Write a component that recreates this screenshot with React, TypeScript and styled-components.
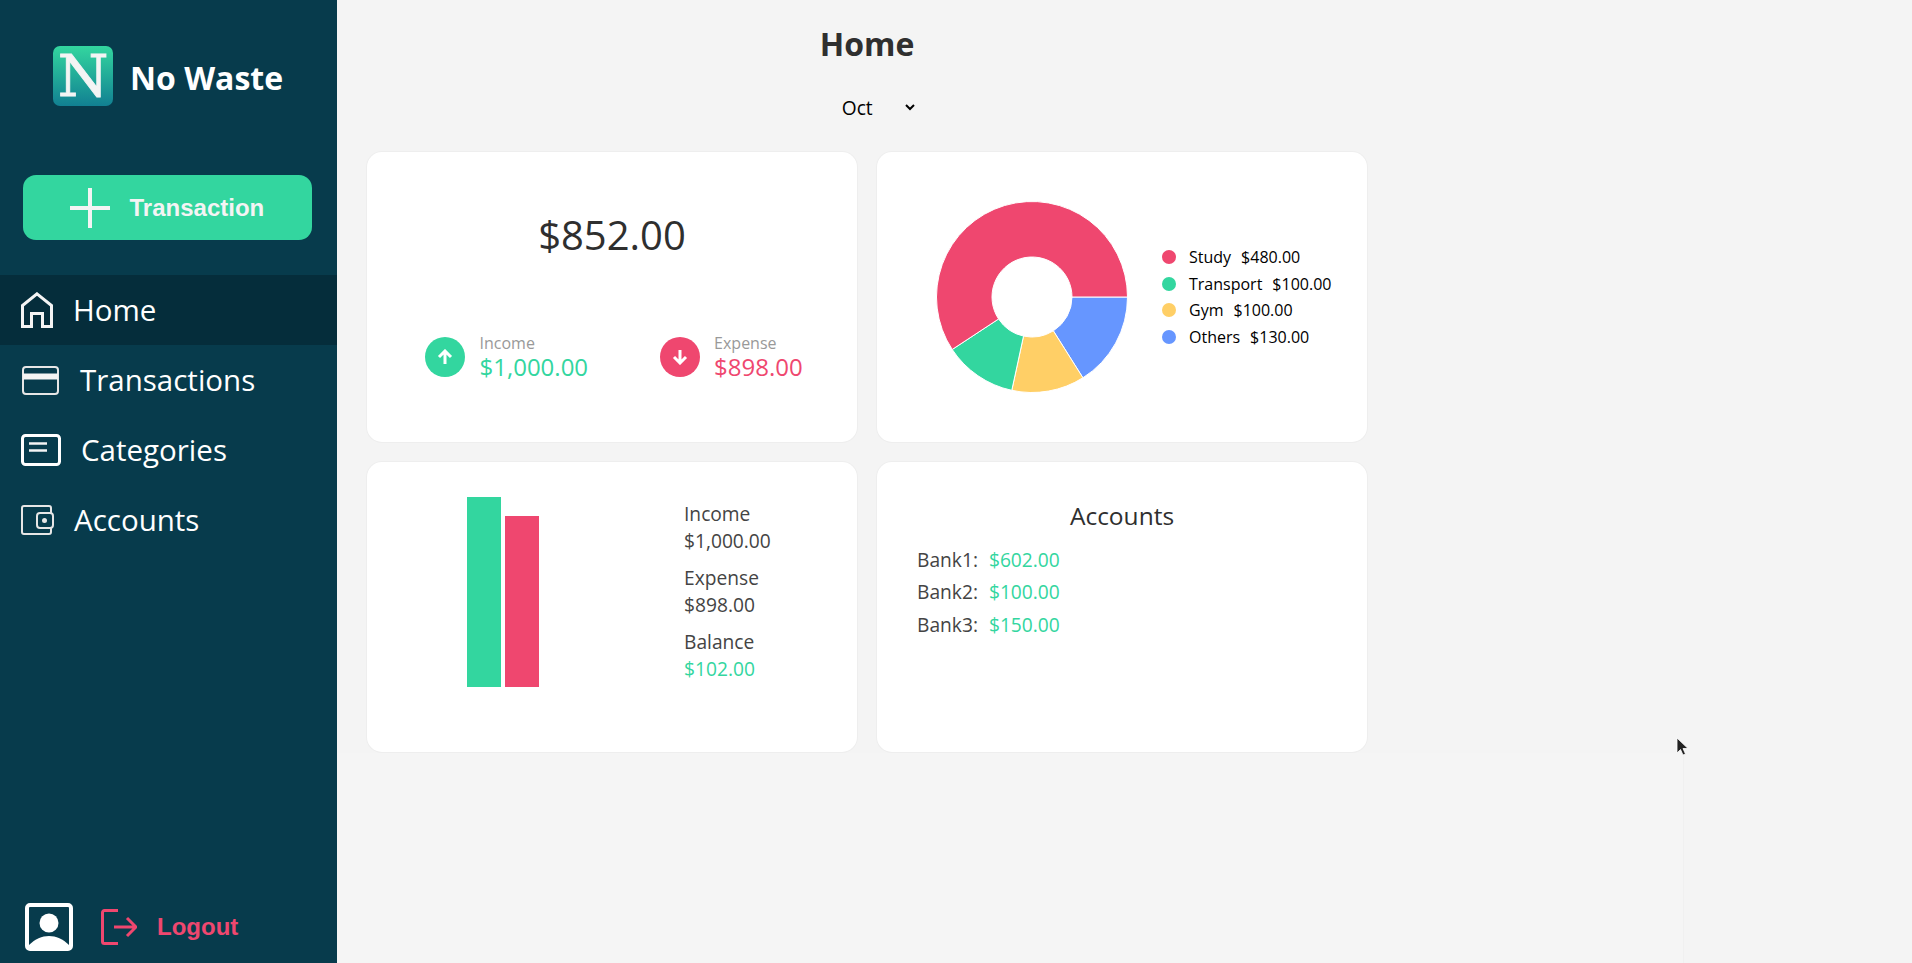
import React from "react";
import styled, { createGlobalStyle } from "styled-components";

const GREEN = "#33d69f";
const RED = "#ef476f";
const YELLOW = "#ffcf66";
const BLUE = "#6696ff";

const GlobalStyle = createGlobalStyle`
  * {
    box-sizing: border-box;
  }
  html, body {
    margin: 0;
    padding: 0;
    height: 100%;
    overflow: hidden;
    background: #f4f4f4;
    font-family: "Open Sans", sans-serif;
  }
`;

const Layout = styled.div`
  display: flex;
  height: 963px;
  width: 1912px;
  overflow: hidden;
`;

const Sidebar = styled.aside`
  width: 337px;
  flex-shrink: 0;
  height: 100%;
  background: #073b4c;
  display: flex;
  flex-direction: column;
`;

const Brand = styled.div`
  display: flex;
  align-items: center;
  gap: 17px;
  padding: 46px 0 0 53px;
`;

const LogoTile = styled.div`
  width: 60px;
  height: 60px;
  border-radius: 7px;
  background: linear-gradient(180deg, #33d69f 0%, #118092 100%);
  color: #f4f4f4;
  display: flex;
  align-items: center;
  justify-content: center;
  font-family: "DejaVu Serif", serif;
  font-weight: 400;
  font-size: 58px;
  line-height: 60px;
  -webkit-text-stroke: 0.8px #f4f4f4;
`;

const BrandName = styled.span`
  margin-top: 2px;
  color: #fff;
  font-size: 32px;
  font-weight: 700;
`;

const AddButton = styled.button`
  margin: 69px 0 0 23px;
  width: 289px;
  height: 65px;
  border: none;
  border-radius: 13px;
  background: ${GREEN};
  color: #f4f4f4;
  display: flex;
  align-items: center;
  gap: 19.5px;
  padding: 0 0 0 47px;
  font-family: "Liberation Sans", sans-serif;
  font-size: 24px;
  font-weight: 700;
`;

const Nav = styled.nav`
  margin-top: 35px;
  display: flex;
  flex-direction: column;
`;

const NavItem = styled.a<{ $active?: boolean; $indent?: number; $gap?: number }>`
  height: 70px;
  display: flex;
  align-items: center;
  gap: ${(p) => p.$gap ?? 20}px;
  padding-left: ${(p) => p.$indent ?? 21}px;
  color: #fff;
  font-size: 29.5px;
  background: ${(p) => (p.$active ? "#052d3b" : "transparent")};
`;

const NavLabel = styled.span`
  margin-bottom: 2px;
`;

const SideFooter = styled.div`
  margin-top: auto;
  padding: 0 0 12px 25px;
  display: flex;
  align-items: center;
`;

const LogoutLink = styled.a`
  margin-left: 28px;
  display: flex;
  align-items: center;
  gap: 20px;
  color: ${RED};
  font-family: "Liberation Sans", sans-serif;
  font-size: 24px;
  font-weight: 700;
`;

const Main = styled.main`
  width: 1347px;
  height: 100%;
  padding-left: 30px;
  background:
    linear-gradient(#f4f4f4 753px, #f0f0f0 753px) right top / 1px 100% no-repeat,
    linear-gradient(#f4f4f4 753px, #f5f5f5 753px);
`;

const Content = styled.div`
  width: 1000px;
  display: flex;
  flex-direction: column;
  align-items: center;
`;

const Title = styled.h1`
  margin: 22px 0 0;
  font-size: 32px;
  line-height: 44px;
  font-weight: 700;
  color: #2f2f2f;
`;

const MonthSelect = styled.select`
  margin: 27px 0 0 21.5px;
  width: 80px;
  height: 28px;
  border: none;
  background: transparent;
  color: #000;
  font-family: "Open Sans", sans-serif;
  font-size: 19.2px;
`;

const CardGrid = styled.div`
  margin-top: 31px;
  width: 100%;
  display: grid;
  grid-template-columns: 490px 490px;
  grid-auto-rows: 290px;
  gap: 20px;
`;

const Card = styled.section`
  background: #fff;
  box-shadow: 0 0 0 1px #eee;
  border-radius: 15px;
  display: flex;
`;

const BalanceCard = styled(Card)`
  flex-direction: column;
`;

const BalanceAmount = styled.div`
  margin-top: 56px;
  text-align: center;
  font-size: 40px;
  line-height: 54px;
  color: #2f2f2f;
`;

const FlowRow = styled.div`
  margin-top: 72px;
  padding-left: 58px;
  display: flex;
  gap: 71.5px;
`;

const Flow = styled.div`
  display: flex;
  align-items: center;
  gap: 14.5px;
`;

const FlowBadge = styled.div<{ $color: string }>`
  width: 40px;
  height: 40px;
  border-radius: 50%;
  background: ${(p) => p.$color};
  display: flex;
  align-items: center;
  justify-content: center;
`;

const FlowText = styled.div`
  display: flex;
  flex-direction: column;
`;

const FlowLabel = styled.span`
  font-size: 16px;
  line-height: 19px;
  color: #999;
`;

const FlowValue = styled.span<{ $color: string }>`
  font-size: 24px;
  line-height: 27px;
  color: ${(p) => p.$color};
`;

const DonutCard = styled(Card)`
  align-items: center;
  padding: 0 0 0 58.5px;
`;

const Legend = styled.ul`
  margin: 0 0 0 34.5px;
  padding: 0;
  list-style: none;
  display: flex;
  flex-direction: column;
`;

const LegendItem = styled.li`
  height: 26.4px;
  display: flex;
  align-items: center;
  gap: 13px;
  font-size: 16px;
  color: #000;
`;

const LegendDot = styled.span<{ $color: string }>`
  width: 14px;
  height: 14px;
  border-radius: 50%;
  background: ${(p) => p.$color};
`;

const LegendAmount = styled.span`
  margin-left: 10px;
`;

const SummaryCard = styled(Card)`
  padding: 35px 0 0 100px;
`;

const Bars = styled.div`
  width: 72px;
  height: 190px;
  display: flex;
  align-items: flex-end;
  gap: 4px;
`;

const Bar = styled.div<{ $color: string; $height: number }>`
  width: 34px;
  height: ${(p) => p.$height}px;
  background: ${(p) => p.$color};
`;

const Summary = styled.div`
  margin: 3px 0 0 145px;
  display: flex;
  flex-direction: column;
  gap: 10px;
`;

const SummaryLine = styled.div<{ $color?: string }>`
  font-size: 19.2px;
  line-height: 27px;
  color: ${(p) => p.$color || "#444"};
`;

const AccountsCard = styled(Card)`
  flex-direction: column;
  padding: 37px 0 0 40px;
`;

const AccountsTitle = styled.h2`
  margin: 0 0 11px -40px;
  text-align: center;
  font-size: 24.5px;
  line-height: 33px;
  font-weight: 400;
  color: #2f2f2f;
`;

const AccountRow = styled.div`
  height: 32.5px;
  display: flex;
  align-items: center;
  gap: 11px;
  font-size: 19.2px;
  color: #444;
`;

const AccountAmount = styled.span`
  color: ${GREEN};
`;

const Cursor = styled.svg`
  position: absolute;
  left: 1676px;
  top: 737px;
`;

const HomeIcon = () => (
  <svg width="32" height="36" viewBox="0 0 32 36" fill="none" stroke="#f4f4f4" strokeWidth="3">
    <path d="M16 1.8 L30.5 13.5 V34.5 H21.5 V21.5 H10.5 V34.5 H1.5 V13.5 Z" />
  </svg>
);

const CardIcon = () => (
  <svg width="37" height="29" viewBox="0 0 37 29" fill="none" stroke="#e6e6e6" strokeWidth="2">
    <rect x="1" y="1" width="35" height="27" rx="3" />
    <rect x="1" y="7.5" width="35" height="6" fill="#f4f4f4" stroke="none" />
  </svg>
);

const CategoryIcon = () => (
  <svg width="40" height="32" viewBox="0 0 40 32" fill="none" stroke="#fff" strokeWidth="3">
    <rect x="1.5" y="1.5" width="37" height="29" rx="3" />
    <path d="M8 9.5 H26 M8 16.5 H26" strokeWidth="2.5" stroke="#f4f4f4" />
  </svg>
);

const WalletIcon = () => (
  <svg width="33" height="30" viewBox="0 0 33 30" fill="none" stroke="#e6e6e6" strokeWidth="2">
    <path d="M30 8 V3 a2 2 0 0 0 -2 -2 H3 a2 2 0 0 0 -2 2 V27 a2 2 0 0 0 2 2 H28 a2 2 0 0 0 2 -2 V23" />
    <rect x="16" y="8" width="16" height="15" rx="3" />
    <circle cx="23.5" cy="15.5" r="2.5" fill="#e6e6e6" stroke="none" />
  </svg>
);

const PlusIcon = () => (
  <svg width="40" height="40" viewBox="0 0 40 40" stroke="#f4f4f4" strokeWidth="4">
    <path d="M20 0 V40 M0 20 H40" />
  </svg>
);

const ProfileIcon = () => (
  <svg width="48" height="48" viewBox="0 0 48 48">
    <rect x="2" y="2" width="44" height="44" rx="3" fill="none" stroke="#fff" strokeWidth="4" />
    <circle cx="24" cy="20" r="9.5" fill="#fff" />
    <path d="M4 42 C10 36 17 33 24 33 C31 33 38 36 44 42 V46 H4 Z" fill="#fff" />
  </svg>
);

const LogoutIcon = () => (
  <svg width="36" height="36" viewBox="0 0 36 36" fill="none" stroke={RED} strokeWidth="3">
    <path d="M17 1.5 H3.5 a2 2 0 0 0 -2 2 V32.5 a2 2 0 0 0 2 2 H17" />
    <path d="M13 18 H35 M26 9 L35 18 L26 27" />
  </svg>
);

const UpIcon = () => (
  <svg width="16" height="16" viewBox="0 0 16 16" fill="none" stroke="#fff" strokeWidth="3">
    <path d="M8 15 V2 M2 8 L8 2 L14 8" />
  </svg>
);

const DownIcon = () => (
  <svg width="16" height="16" viewBox="0 0 16 16" fill="none" stroke="#fff" strokeWidth="3">
    <path d="M8 1 V14 M2 8 L8 14 L14 8" />
  </svg>
);

const slices = [
  { name: "Others", value: 130, color: BLUE },
  { name: "Gym", value: 100, color: YELLOW },
  { name: "Transport", value: 100, color: GREEN },
  { name: "Study", value: 480, color: RED },
];

const legend = [slices[3], slices[2], slices[1], slices[0]];

const Donut = () => {
  const R = 95.5;
  const r = 40;
  const c = 96;
  const total = slices.reduce((sum, s) => sum + s.value, 0);
  let angle = 0;
  return (
    <svg width="192" height="192" viewBox="0 0 192 192">
      {slices.map((s) => {
        const a0 = angle;
        const a1 = angle + (s.value / total) * Math.PI * 2;
        angle = a1;
        const large = a1 - a0 > Math.PI ? 1 : 0;
        const pt = (rad: number, a: number) =>
          `${(c + rad * Math.cos(a)).toFixed(2)} ${(c + rad * Math.sin(a)).toFixed(2)}`;
        const d = `M${pt(R, a0)} A${R} ${R} 0 ${large} 1 ${pt(R, a1)} L${pt(r, a1)} A${r} ${r} 0 ${large} 0 ${pt(r, a0)} Z`;
        return <path key={s.name} d={d} fill={s.color} stroke="#fff" strokeWidth="1" />;
      })}
    </svg>
  );
};

const App: React.FC = () => {
  return (
    <Layout>
      <GlobalStyle />
      <Sidebar>
        <Brand>
          <LogoTile>N</LogoTile>
          <BrandName>No Waste</BrandName>
        </Brand>
        <AddButton>
          <PlusIcon />
          Transaction
        </AddButton>
        <Nav>
          <NavItem $active>
            <HomeIcon />
            <NavLabel>Home</NavLabel>
          </NavItem>
          <NavItem $indent={22} $gap={21}>
            <CardIcon />
            <NavLabel>Transactions</NavLabel>
          </NavItem>
          <NavItem>
            <CategoryIcon />
            <NavLabel>Categories</NavLabel>
          </NavItem>
          <NavItem>
            <WalletIcon />
            <NavLabel>Accounts</NavLabel>
          </NavItem>
        </Nav>
        <SideFooter>
          <ProfileIcon />
          <LogoutLink>
            <LogoutIcon />
            Logout
          </LogoutLink>
        </SideFooter>
      </Sidebar>
      <Main>
        <Content>
          <Title>Home</Title>
          <MonthSelect defaultValue="Oct">
            <option>Sep</option>
            <option>Oct</option>
            <option>Nov</option>
          </MonthSelect>
          <CardGrid>
            <BalanceCard>
              <BalanceAmount>$852.00</BalanceAmount>
              <FlowRow>
                <Flow>
                  <FlowBadge $color={GREEN}>
                    <UpIcon />
                  </FlowBadge>
                  <FlowText>
                    <FlowLabel>Income</FlowLabel>
                    <FlowValue $color={GREEN}>$1,000.00</FlowValue>
                  </FlowText>
                </Flow>
                <Flow>
                  <FlowBadge $color={RED}>
                    <DownIcon />
                  </FlowBadge>
                  <FlowText>
                    <FlowLabel>Expense</FlowLabel>
                    <FlowValue $color={RED}>$898.00</FlowValue>
                  </FlowText>
                </Flow>
              </FlowRow>
            </BalanceCard>
            <DonutCard>
              <Donut />
              <Legend>
                {legend.map((s) => (
                  <LegendItem key={s.name}>
                    <LegendDot $color={s.color} />
                    <span>
                      {s.name}
                      <LegendAmount>${s.value}.00</LegendAmount>
                    </span>
                  </LegendItem>
                ))}
              </Legend>
            </DonutCard>
            <SummaryCard>
              <Bars>
                <Bar $color={GREEN} $height={190} />
                <Bar $color={RED} $height={171} />
              </Bars>
              <Summary>
                <div>
                  <SummaryLine>Income</SummaryLine>
                  <SummaryLine>$1,000.00</SummaryLine>
                </div>
                <div>
                  <SummaryLine>Expense</SummaryLine>
                  <SummaryLine>$898.00</SummaryLine>
                </div>
                <div>
                  <SummaryLine>Balance</SummaryLine>
                  <SummaryLine $color={GREEN}>$102.00</SummaryLine>
                </div>
              </Summary>
            </SummaryCard>
            <AccountsCard>
              <AccountsTitle>Accounts</AccountsTitle>
              <AccountRow>
                Bank1: <AccountAmount>$602.00</AccountAmount>
              </AccountRow>
              <AccountRow>
                Bank2: <AccountAmount>$100.00</AccountAmount>
              </AccountRow>
              <AccountRow>
                Bank3: <AccountAmount>$150.00</AccountAmount>
              </AccountRow>
            </AccountsCard>
          </CardGrid>
        </Content>
      </Main>
      <Cursor width="13" height="20" viewBox="0 0 13 20">
        <path d="M1 1 V16 L4.5 12.5 L7 18 L9.5 17 L7 11.5 H12 Z" fill="#222" stroke="#fff" strokeWidth="0.8" />
      </Cursor>
    </Layout>
  );
};

export default App;
